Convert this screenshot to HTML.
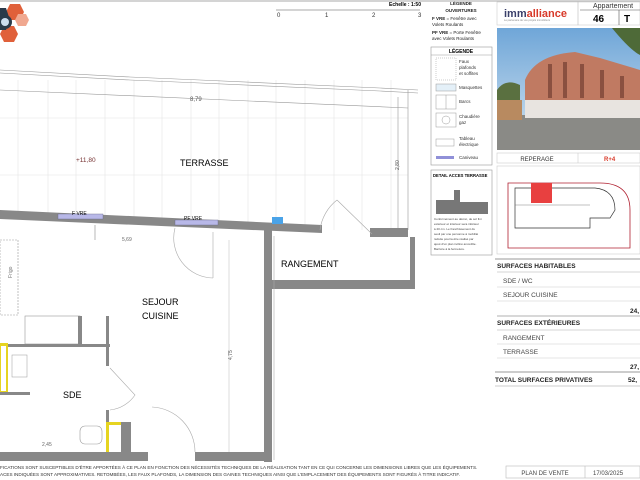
<!DOCTYPE html>
<html><head><meta charset="utf-8"><style>
html,body{margin:0;padding:0;background:#fff;width:640px;height:480px;overflow:hidden}
svg{display:block;font-family:"Liberation Sans",sans-serif}
</style></head><body>
<svg width="640" height="480" viewBox="0 0 640 480" xmlns="http://www.w3.org/2000/svg">
<rect width="640" height="480" fill="#fff"/>
<line x1="0" y1="1" x2="640" y2="1" stroke="#aaa" stroke-width="1"/>
<!-- logo -->
<g>
<polygon points="10,4 20,4 24,12 20,20 10,20 6,12" fill="#e0603a"/>
<polygon points="18,14 26,14 29,20 26,26 18,26 15,20" fill="#f0a890"/>
<polygon points="4,26 14,26 18,34 14,42 4,42 0,34" fill="#e0603a"/>
<polygon points="0,8 6,8 10,20 6,30 0,30" fill="#2a3a4a"/>
<circle cx="5" cy="22" r="7" fill="#2a3a4a"/>
<circle cx="5" cy="22" r="4" fill="#cde"/>
</g>
<!-- scale -->
<text x="421" y="6" font-size="5" font-weight="bold" text-anchor="end">Echelle : 1:50</text>
<line x1="276" y1="10" x2="420" y2="10" stroke="#555" stroke-width="0.5"/>
<text x="277" y="17" font-size="6" fill="#333">0</text>
<text x="325" y="17" font-size="6" fill="#333">1</text>
<text x="372" y="17" font-size="6" fill="#333">2</text>
<text x="418" y="17" font-size="6" fill="#333">3</text>
<!-- terrace grid -->
<g stroke="#e4e4e4" stroke-width="0.6">
<line x1="18" y1="80" x2="18" y2="215"/><line x1="48" y1="80" x2="48" y2="215"/><line x1="76" y1="80" x2="76" y2="217"/><line x1="105" y1="80" x2="105" y2="219"/><line x1="134" y1="80" x2="134" y2="220"/><line x1="162" y1="80" x2="162" y2="222"/><line x1="191" y1="80" x2="191" y2="223"/><line x1="219" y1="80" x2="219" y2="225"/><line x1="248" y1="80" x2="248" y2="227"/><line x1="276" y1="80" x2="276" y2="229"/><line x1="305" y1="80" x2="305" y2="230"/><line x1="334" y1="80" x2="334" y2="230"/><line x1="362" y1="80" x2="362" y2="230"/><line x1="391" y1="80" x2="391" y2="230"/>
<line x1="0" y1="118" x2="408" y2="118"/><line x1="0" y1="175" x2="408" y2="175"/>
</g>
<g stroke="#999" stroke-width="0.6" fill="none">
<polyline points="0,70 130,77 200,80 380,88 418,90"/>
<polyline points="0,73 130,80 200,83 380,91 418,93"/>
<polyline points="0,90 408,108"/>
<line x1="408" y1="90" x2="408" y2="230"/>
<line x1="398" y1="97" x2="398" y2="228"/>
</g>
<text x="190" y="101" font-size="6" fill="#555">8,79</text>
<text x="76" y="162" font-size="6.5" fill="#733">+11,80</text>
<text x="180" y="166" font-size="9">TERRASSE</text>
<text x="399" y="170" font-size="5" fill="#555" transform="rotate(-90 399 170)">2,80</text>
<!-- main wall -->
<polygon points="0,210 322,225 322,233 0,219" fill="#888"/>
<polygon points="370,228 408,228 408,237 370,237" fill="#888"/>
<rect x="58" y="214" width="45" height="5" fill="#b8b8e8" stroke="#668" stroke-width="0.4"/>
<rect x="175" y="220" width="43" height="5" fill="#b8b8e8" stroke="#668" stroke-width="0.4"/>
<text x="72" y="215" font-size="5">F VRE</text>
<text x="184" y="220" font-size="5">PF VRE</text>
<rect x="272" y="217" width="11" height="7" fill="#4aa3e8"/>
<text x="122" y="241" font-size="5" fill="#666">5,69</text>
<path d="M95,225 L95,240" stroke="#888" stroke-width="0.6" fill="none"/>
<path d="M175,228 A40,40 0 0,0 213,278 M213,232 L213,278" stroke="#aaa" stroke-width="0.6" fill="none"/>
<path d="M337,200 L372,234 M337,200 A45,45 0 0,0 320,230" stroke="#aaa" stroke-width="0.6" fill="none"/>
<!-- vertical walls -->
<rect x="264" y="230" width="8" height="232" fill="#888"/>
<rect x="272" y="280" width="138" height="9" fill="#888"/>
<rect x="410" y="237" width="5" height="52" fill="#888"/>
<line x1="274" y1="236" x2="274" y2="460" stroke="#aaa" stroke-width="0.6"/>
<text x="281" y="267" font-size="9">RANGEMENT</text>
<text x="232" y="360" font-size="5" fill="#555" transform="rotate(-90 232 360)">4,75</text>
<line x1="229" y1="240" x2="229" y2="455" stroke="#bbb" stroke-width="0.5"/>
<text x="142" y="305" font-size="9">SEJOUR</text>
<text x="142" y="319" font-size="9">CUISINE</text>
<!-- kitchen/sde -->
<g stroke="#999" stroke-width="0.6" fill="none">
<rect x="0" y="240" width="18" height="75" stroke-dasharray="2,1"/>
<rect x="25" y="316" width="55" height="28"/>
</g>
<rect x="0" y="344" width="110" height="3" fill="#888"/>
<rect x="78" y="316" width="4" height="30" fill="#888"/>
<rect x="106" y="316" width="3" height="50" fill="#888"/>
<rect x="0" y="343" width="8" height="52" fill="#e6d420"/>
<rect x="1" y="346" width="5" height="45" fill="#fff"/>
<rect x="0" y="392" width="30" height="3" fill="#888"/>
<rect x="12" y="355" width="15" height="22" fill="none" stroke="#999" stroke-width="0.5"/>
<text x="63" y="398" font-size="9">SDE</text>
<path d="M110,368 L135,395 A35,35 0 0,1 110,410" stroke="#aaa" stroke-width="0.6" fill="none"/>
<rect x="106" y="410" width="3" height="45" fill="#888"/>
<rect x="106" y="422" width="15" height="3" fill="#e6d420"/>
<rect x="106" y="422" width="3" height="33" fill="#e6d420"/>
<rect x="121" y="422" width="10" height="33" fill="#888"/>
<rect x="80" y="426" width="22" height="18" rx="5" fill="none" stroke="#999" stroke-width="0.6"/>
<path d="M152,407 A45,45 0 0,1 195,452" stroke="#aaa" stroke-width="0.6" fill="none"/>
<text x="42" y="446" font-size="5" fill="#666">2,45</text>
<rect x="0" y="452" width="148" height="9" fill="#888"/>
<rect x="195" y="452" width="75" height="9" fill="#888"/>
<text x="3" y="269" font-size="5" fill="#777" transform="rotate(-90 12 269)">Frigo</text>
<!-- footer text -->
<text x="0" y="469" font-size="4.6" fill="#333">FICATIONS SONT SUSCEPTIBLES D'ÊTRE APPORTÉES À CE PLAN EN FONCTION DES NÉCESSITÉS TECHNIQUES DE LA RÉALISATION TANT EN CE QUI CONCERNE LES DIMENSIONS LIBRES QUE LES ÉQUIPEMENTS.</text>
<text x="0" y="476" font-size="4.6" fill="#333">ACES INDIQUÉES SONT APPROXIMATIVES. RETOMBÉES, LES FAUX PLAFONDS, LA DIMENSION DES GAINES TECHNIQUES AINSI QUE L'EMPLACEMENT DES ÉQUIPEMENTS SONT FIGURÉS À TITRE INDICATIF.</text>
<!-- legend column -->
<g font-size="4.5" fill="#222">
<text x="461" y="5" font-weight="bold" text-anchor="middle">LÉGENDE</text>
<text x="461" y="12" font-weight="bold" text-anchor="middle">OUVERTURES</text>
<text x="432" y="20"><tspan font-weight="bold">F VRE</tspan> = Fenêtre avec</text>
<text x="432" y="26">Volets Roulants</text>
<text x="432" y="34"><tspan font-weight="bold">PF VRE</tspan> = Porte Fenêtre</text>
<text x="432" y="40">avec Volets Roulants</text>
</g>
<rect x="431" y="47" width="61" height="118" fill="none" stroke="#999" stroke-width="0.6"/>
<line x1="431" y1="55" x2="492" y2="55" stroke="#999" stroke-width="0.6"/>
<text x="461" y="53" font-size="5" font-weight="bold" text-anchor="middle">LÉGENDE</text>
<g stroke="#999" stroke-width="0.5" fill="none">
<rect x="436" y="58" width="20" height="22" stroke-dasharray="1,1"/>
<rect x="436" y="84" width="20" height="7" fill="#e4f0f8"/>
<rect x="436" y="95" width="20" height="14"/><line x1="446" y1="95" x2="446" y2="109"/>
<rect x="436" y="113" width="20" height="14"/><circle cx="446" cy="120" r="4"/>
<rect x="436" y="139" width="18" height="7"/>
</g>
<rect x="436" y="156" width="18" height="3" fill="#9090d8"/>
<g font-size="4.5" fill="#333">
<text x="459" y="63">Faux</text><text x="459" y="69">plafonds</text><text x="459" y="75">et soffites</text>
<text x="459" y="89">Masquettes</text>
<text x="459" y="103">Barcs</text>
<text x="459" y="118">Chaudière</text><text x="459" y="124">gaz</text>
<text x="459" y="140">Tableau</text><text x="459" y="146">électrique</text>
<text x="459" y="159">Caniveau</text>
</g>
<rect x="431" y="170" width="61" height="85" fill="none" stroke="#999" stroke-width="0.6"/>
<text x="433" y="177" font-size="4.2" font-weight="bold">DETAIL ACCES TERRASSE</text>
<polygon points="436,200 454,200 454,190 460,190 460,202 488,202 488,214 436,214" fill="#777"/>
<g font-size="3" fill="#444">
<text x="434" y="220">Conformément au décret, de sol fini</text>
<text x="434" y="225">extérieur et intérieur sera inférieur</text>
<text x="434" y="230">à 20 cm. Le franchissement du</text>
<text x="434" y="235">seuil par une personne à mobilité</text>
<text x="434" y="240">réduite pourra être réalisé par</text>
<text x="434" y="245">ajout d'un plan incliné amovible.</text>
<text x="434" y="250">Barrière à la fermeture.</text>
</g>
<!-- right panel header -->
<rect x="497" y="2" width="81" height="23" fill="none" stroke="#ccc" stroke-width="0.6"/>
<text x="504" y="17" font-size="11" font-weight="bold" fill="#3a3f6a">imm<tspan fill="#d83a2a">alliance</tspan></text>
<text x="504" y="21" font-size="2.6" fill="#888">Le partenaire de vos projets immobiliers</text>
<rect x="578" y="2" width="62" height="23" fill="none" stroke="#ccc" stroke-width="0.6"/>
<text x="593" y="8" font-size="7" fill="#333">Appartement</text>
<line x1="580" y1="10" x2="640" y2="10" stroke="#555" stroke-width="0.6"/>
<line x1="619" y1="10" x2="619" y2="25" stroke="#555" stroke-width="0.6"/>
<text x="593" y="22" font-size="10" font-weight="bold">46</text>
<text x="624" y="22" font-size="10" font-weight="bold">T</text>
<!-- photo -->
<defs><linearGradient id="sky" x1="0" y1="0" x2="0" y2="1"><stop offset="0" stop-color="#6fa6d8"/><stop offset="1" stop-color="#d4e4f0"/></linearGradient></defs>
<rect x="497" y="28" width="143" height="122" fill="url(#sky)"/>
<rect x="497" y="115" width="143" height="35" fill="#8a8a86"/>
<path d="M525,80 Q535,55 575,52 L600,58 L640,70 L640,118 L525,118 Z" fill="#c07a62"/>
<rect x="525" y="100" width="115" height="18" fill="#e8e4e0"/>
<g fill="#8a5040"><rect x="548" y="64" width="4" height="34"/><rect x="563" y="62" width="4" height="36"/><rect x="580" y="64" width="4" height="34"/><rect x="600" y="70" width="4" height="28"/><rect x="620" y="76" width="4" height="22"/></g>
<path d="M612,28 Q630,50 640,55 L640,28 Z" fill="#4e6a38"/>
<path d="M497,90 Q505,78 520,85 L520,118 L497,118 Z" fill="#5a7040"/>
<rect x="497" y="100" width="25" height="20" fill="#b88a60"/>
<!-- reperage -->
<rect x="497" y="153" width="143" height="10" fill="none" stroke="#ccc" stroke-width="0.6"/>
<line x1="578" y1="153" x2="578" y2="163" stroke="#ccc" stroke-width="0.6"/>
<text x="537" y="161" font-size="6" text-anchor="middle" fill="#333">REPERAGE</text>
<text x="604" y="161" font-size="6" font-weight="bold" fill="#d83a2a">R+4</text>
<rect x="497" y="166" width="143" height="88" fill="none" stroke="#ccc" stroke-width="0.6"/>
<path d="M508,183 L600,183 Q630,183 630,210 L630,248 L508,248 Z" fill="none" stroke="#b02030" stroke-width="0.8"/>
<path d="M515,188 L595,188 Q615,190 615,210 L610,218 L590,218 L590,228 L515,228 Z" fill="#fff" stroke="#333" stroke-width="0.7"/>
<rect x="531" y="183" width="21" height="20" fill="#e84040"/>
<line x1="515" y1="205" x2="590" y2="205" stroke="#666" stroke-width="0.4"/>
<!-- surfaces -->
<line x1="495" y1="259" x2="640" y2="259" stroke="#999" stroke-width="1"/>
<g font-size="6.5" fill="#222">
<text x="497" y="268" font-weight="bold">SURFACES HABITABLES</text>
<line x1="497" y1="272" x2="640" y2="272" stroke="#aaa" stroke-width="0.5"/>
<text x="503" y="283" fill="#444">SDE / WC</text>
<line x1="497" y1="287" x2="640" y2="287" stroke="#ccc" stroke-width="0.5"/>
<text x="503" y="297" fill="#444">SEJOUR CUISINE</text>
<line x1="497" y1="301" x2="640" y2="301" stroke="#ccc" stroke-width="0.5"/>
<text x="630" y="313" font-weight="bold">24,</text>
<line x1="497" y1="316" x2="640" y2="316" stroke="#999" stroke-width="0.8"/>
<text x="497" y="325" font-weight="bold">SURFACES EXTÉRIEURES</text>
<line x1="497" y1="330" x2="640" y2="330" stroke="#aaa" stroke-width="0.5"/>
<text x="503" y="340" fill="#444">RANGEMENT</text>
<line x1="497" y1="344" x2="640" y2="344" stroke="#ccc" stroke-width="0.5"/>
<text x="503" y="354" fill="#444">TERRASSE</text>
<line x1="497" y1="358" x2="640" y2="358" stroke="#ccc" stroke-width="0.5"/>
<text x="630" y="369" font-weight="bold">27,</text>
<line x1="495" y1="372" x2="640" y2="372" stroke="#777" stroke-width="0.8"/>
<text x="495" y="382" font-weight="bold">TOTAL SURFACES PRIVATIVES</text>
<text x="628" y="382" font-weight="bold">52,</text>
<line x1="495" y1="386" x2="640" y2="386" stroke="#999" stroke-width="0.6"/>
</g>
<!-- bottom footer -->
<rect x="506" y="466" width="134" height="12" fill="none" stroke="#bbb" stroke-width="0.6"/>
<line x1="585" y1="466" x2="585" y2="478" stroke="#bbb" stroke-width="0.6"/>
<text x="545" y="475" font-size="6" text-anchor="middle" fill="#444">PLAN DE VENTE</text>
<text x="593" y="475" font-size="6" fill="#444">17/03/2025</text>
</svg>
</body></html>
